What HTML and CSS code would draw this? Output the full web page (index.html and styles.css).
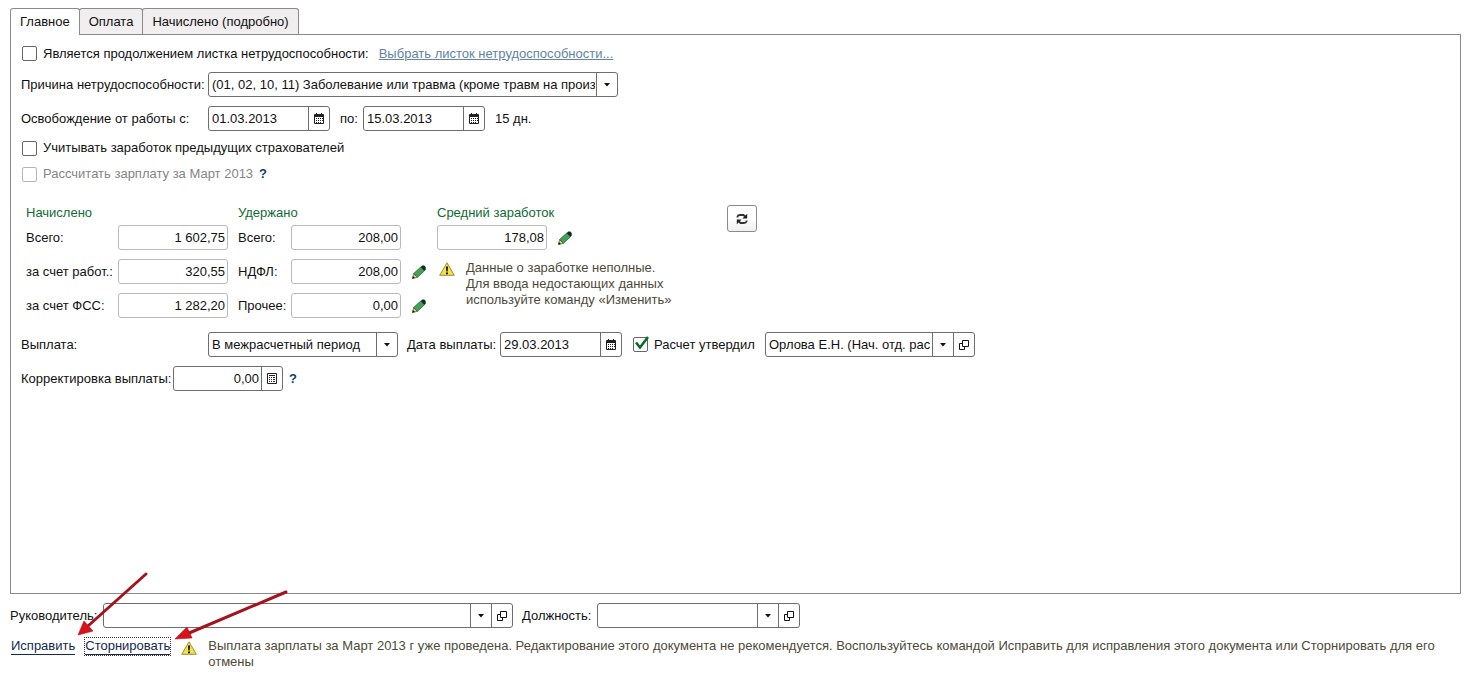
FILE: index.html
```html
<!DOCTYPE html>
<html lang="ru">
<head>
<meta charset="utf-8">
<meta name="viewport" content="width=device-width, initial-scale=1">
<title>Больничный лист</title>
<link rel="stylesheet" href="styles.css">
</head>
<body>
<svg class="sprite" aria-hidden="true">
  <symbol id="arrow" viewBox="0 0 8 4"><path d="M1 0h6L4 3.5z" fill="#111"/></symbol>
  <symbol id="calendar" viewBox="0 0 10 11"><path d="M0 2Q0 1 1 1h1V0h1v1h4V0h1v1h1q1 0 1 1v8q0 1-1 1H1Q0 11 0 10z" fill="#222"/><path d="M1 4h8v6H1z" fill="#fff"/><path d="M2 5h1v1H2zM4 5h1v1H4zM6 5h1v1H6zM2 7h1v1H2zM4 7h1v1H4zM6 7h1v1H6zM8 5h1v1H8zM8 7h1v1H8zM2 9h1v1H2zM4 9h1v1H4zM6 9h1v1H6z" fill="#222"/></symbol>
  <symbol id="calc" viewBox="0 0 10 11"><path d="M.5.5h9v10h-9z" fill="#fff" stroke="#222"/><path d="M2 2h6v1H2zM2 4h1v1H2zM4 4h1v1H4zM6 4h2v1H6zM2 6h1v1H2zM4 6h1v1H4zM6 6h2v1H6zM2 8h1v1H2zM4 8h1v1H4zM6 8h2v1H6z" fill="#222"/></symbol>
  <symbol id="open" viewBox="0 0 10 10"><path d="M3.500.5h6v6h-6zM3.500 3.500h-3v6h5v-3" fill="none" stroke="#111"/></symbol>
  <symbol id="pencil" viewBox="0 0 14 14"><path d="M.5 13.500 1.600 8.600 5.500 12.300z" fill="#e8cf86" stroke="#4a3a18" stroke-width=".6"/><path d="M.3 13.700l.6-2.700 2.100 2z" fill="#111"/><path d="M1.600 8.600 8.700 2l3.700 3.900-6.900 6.400z" fill="#43a157" stroke="#1c5b2d" stroke-width=".7"/><path d="M8.700 2 10.400.5h1.800l1.500 1.500v2.500L12.400 5.900z" fill="#0d2c18"/></symbol>
  <symbol id="warning" viewBox="0 0 16 14"><path d="M8 .8 15.300 13.300H.7z" fill="#f3e04a" stroke="#9a8f3a" stroke-linejoin="round"/><path d="M7 4.500h2L8.700 9.500H7.300zM7 10.400h2v1.800H7z" fill="#111"/></symbol>
  <symbol id="refresh" viewBox="0 0 12 12"><path d="M1.500 4.500V3.500Q2 2 4 2h3.500L9 3.500M10.500 7.500v1Q10 10 8 10H4.500L3 8.500" fill="none" stroke="#333" stroke-width="1.800"/><path d="M11.200.8v4.600H6.400zM.8 11.200V6.600h4.800z" fill="#222"/></symbol>
</svg>

<nav class="tabs" role="tablist">
  <button class="tab tab-active" role="tab" aria-selected="true">Главное</button>
  <button class="tab" role="tab" aria-selected="false">Оплата</button>
  <button class="tab" role="tab" aria-selected="false">Начислено (подробно)</button>
</nav>

<main class="panel">
  <div class="row row-short">
    <label class="check"><input type="checkbox"><span>Является продолжением листка нетрудоспособности:</span></label>
    <a class="pick" href="#">Выбрать листок нетрудоспособности...</a>
  </div>
  <div class="row">
    <label class="caption" for="reason">Причина нетрудоспособности:</label>
    <div class="field field-xl">
      <select id="reason"><option>(01, 02, 10, 11) Заболевание или травма (кроме травм на производстве)</option></select>
      <button aria-label="Открыть список"><svg class="i-arrow"><use href="#arrow"/></svg></button>
    </div>
  </div>
  <div class="row row-dates">
    <label class="caption" for="from">Освобождение от работы с:</label>
    <div class="field field-date"><input id="from" type="text" value="01.03.2013"><button aria-label="Календарь"><svg class="i-cal"><use href="#calendar"/></svg></button></div>
    <label class="between" for="to">по:</label>
    <div class="field field-date"><input id="to" type="text" value="15.03.2013"><button aria-label="Календарь"><svg class="i-cal"><use href="#calendar"/></svg></button></div>
    <span class="days">15 дн.</span>
  </div>
  <div class="row row-check"><label class="check"><input type="checkbox"><span>Учитывать заработок предыдущих страхователей</span></label></div>
  <div class="row row-check"><label class="check check-off"><input type="checkbox" disabled><span>Рассчитать зарплату за Март 2013</span></label><button class="help" aria-label="Справка">?</button></div>

  <section class="totals">
    <div class="group group-accrued">
      <h2>Начислено</h2>
      <div class="amounts">
        <label for="a1">Всего:</label><input id="a1" class="amount" type="text" readonly value="1 602,75">
        <label for="a2">за счет работ.:</label><input id="a2" class="amount" type="text" readonly value="320,55">
        <label for="a3">за счет ФСС:</label><input id="a3" class="amount" type="text" readonly value="1 282,20">
      </div>
    </div>
    <div class="group group-held">
      <h2>Удержано</h2>
      <div class="amounts">
        <label for="h1">Всего:</label><input id="h1" class="amount" type="text" readonly value="208,00"><span></span>
        <label for="h2">НДФЛ:</label><input id="h2" class="amount" type="text" readonly value="208,00"><button class="edit" aria-label="Изменить НДФЛ"><svg class="i-pencil"><use href="#pencil"/></svg></button>
        <label for="h3">Прочее:</label><input id="h3" class="amount" type="text" readonly value="0,00"><button class="edit" aria-label="Изменить прочее"><svg class="i-pencil"><use href="#pencil"/></svg></button>
      </div>
    </div>
    <div class="group group-average">
      <h2><label for="avg">Средний заработок</label></h2>
      <div class="average"><input id="avg" class="amount" type="text" readonly value="178,08"><button class="edit" aria-label="Изменить средний заработок"><svg class="i-pencil"><use href="#pencil"/></svg></button></div>
      <div class="notice"><svg class="i-warning"><use href="#warning"/></svg><p>Данные о заработке неполные.<br>Для ввода недостающих данных<br>используйте команду «Изменить»</p></div>
    </div>
    <button class="refresh" aria-label="Пересчитать"><svg class="i-refresh"><use href="#refresh"/></svg></button>
  </section>

  <div class="row">
    <label class="caption" for="pay">Выплата:</label>
    <div class="field field-pay"><select id="pay"><option>В межрасчетный период</option></select><button aria-label="Открыть список"><svg class="i-arrow"><use href="#arrow"/></svg></button></div>
    <label class="pay-date" for="paydate">Дата выплаты:</label>
    <div class="field field-date"><input id="paydate" type="text" value="29.03.2013"><button aria-label="Календарь"><svg class="i-cal"><use href="#calendar"/></svg></button></div>
    <label class="check approved"><input type="checkbox" checked><span>Расчет утвердил</span></label>
    <div class="field field-person"><input type="text" aria-label="Расчет утвердил" value="Орлова Е.Н. (Нач. отд. расчетов)"><button aria-label="Открыть список"><svg class="i-arrow"><use href="#arrow"/></svg></button><button aria-label="Открыть"><svg class="i-open"><use href="#open"/></svg></button></div>
  </div>
  <div class="row">
    <label class="caption caption-fix" for="fix">Корректировка выплаты:</label>
    <div class="field field-fix"><input id="fix" class="number" type="text" value="0,00"><button aria-label="Калькулятор"><svg class="i-cal"><use href="#calc"/></svg></button></div>
    <button class="help" aria-label="Справка">?</button>
  </div>
</main>

<footer class="footer">
  <div class="signers">
    <label class="head" for="head">Руководитель:</label>
    <div class="field field-xl"><input id="head" type="text"><button aria-label="Открыть список"><svg class="i-arrow"><use href="#arrow"/></svg></button><button aria-label="Открыть"><svg class="i-open"><use href="#open"/></svg></button></div>
    <label class="post" for="post">Должность:</label>
    <div class="field field-post"><input id="post" type="text"><button aria-label="Открыть список"><svg class="i-arrow"><use href="#arrow"/></svg></button><button aria-label="Открыть"><svg class="i-open"><use href="#open"/></svg></button></div>
  </div>
  <div class="actions">
    <a class="action action-edit" href="#">Исправить</a>
    <a class="action action-storno" href="#">Сторнировать</a>
    <svg class="i-warning"><use href="#warning"/></svg>
    <p>Выплата зарплаты за Март 2013 г уже проведена. Редактирование этого документа не рекомендуется. Воспользуйтесь командой Исправить для исправления этого документа или Сторнировать для его отмены</p>
  </div>
  <svg class="pointers" viewBox="0 0 220 80" aria-hidden="true">
    <path d="M76 4 18 56M216 22 118 63.500" stroke="#a3141c" stroke-width="3" stroke-linecap="round"/>
    <path d="M8 65 14 51 23 61zM105 69 117 57 122 68z" fill="#d8121a" stroke="#b01018" stroke-width=".6"/>
  </svg>
</footer>
</body>
</html>
```

FILE: styles.css
```css
* { box-sizing: border-box; }

body {
  margin: 0;
  min-height: 100vh;
  padding: 8px 10px;
  display: flex;
  flex-direction: column;
  background: #fff;
  color: #111;
  font: 13px/16px "Liberation Sans", Arial, sans-serif;
}

button, input, select { font: inherit; color: inherit; margin: 0; }
button { padding: 0; border: 0; background: none; }
h2, p { margin: 0; font: inherit; }
svg { display: block; flex: none; }
label { white-space: nowrap; }
.sprite { position: absolute; width: 0; height: 0; }

.tabs { display: flex; }
.tab {
  height: 26px;
  padding: 0 9px;
  border: 1px solid #8a8a8a;
  border-bottom: 0;
  border-radius: 3px 3px 0 0;
  background: #f0eeee;
  margin-right: -1px;
}
.tab-active {
  height: 27px;
  margin-bottom: -1px;
  background: #fff;
  z-index: 1;
}

.panel {
  flex: 1;
  border: 1px solid #8a8a8a;
  padding: 8px 10px;
}
.row { display: flex; align-items: center; min-height: 25px; margin-bottom: 9px; }
.row-short { min-height: 21px; margin-bottom: 8px; }
.row-dates { margin-bottom: 8px; }
.row-check { min-height: 18px; margin-bottom: 8px; }

.caption { width: 187px; }
.caption-fix { width: 152px; }
.between { width: 33px; padding-left: 10px; }
.days { padding-left: 10px; }
.pick { margin-left: 10px; color: #5f84a6; }

.check { display: flex; align-items: center; gap: 6px; }
.check input {
  appearance: none;
  position: relative;
  width: 15px;
  height: 15px;
  margin-left: 1px;
  border: 1px solid #666;
  border-radius: 2px;
  background: #fff;
}
.check-off { color: #858585; }
.check-off input { border-color: #b5b5b5; }
.check input:checked::after {
  content: "";
  position: absolute;
  left: 0;
  top: -2px;
  width: 15px;
  height: 14px;
  background: url("data:image/svg+xml,%3Csvg xmlns='http://www.w3.org/2000/svg' viewBox='0 0 15 14'%3E%3Cpath d='M2 6.500l4 5L14 1' fill='none' stroke='%23086b28' stroke-width='2.600'/%3E%3C/svg%3E") no-repeat;
}
.help { width: 8px; margin-left: 6px; color: #0b3f6c; font-weight: bold; }

.field {
  display: flex;
  height: 25px;
  border: 1px solid #6e6e6e;
  border-radius: 3px;
  background: #fff;
}
.field input, .field select {
  appearance: none;
  flex: 1;
  min-width: 0;
  width: 0;
  padding: 0 1px 0 3px;
  border: 0;
  outline: 0;
  background: none;
}
.field .number { padding-right: 2px; text-align: right; }
.field button {
  display: flex;
  align-items: center;
  justify-content: center;
  width: 21px;
  border-left: 1px solid #6e6e6e;
}
.field-xl { width: 410px; }
.field-date { width: 122px; }
.field-pay { width: 190px; }
.field-person { width: 210px; }
.field-person input { margin-right: 2px; padding-right: 0; }
.field-fix { width: 110px; }
.field-post { width: 203px; }

.i-arrow { width: 8px; height: 4px; }
.i-cal { width: 10px; height: 11px; }
.i-open { width: 10px; height: 10px; }
.i-pencil { width: 14px; height: 14px; }
.i-warning { width: 16px; height: 14px; }
.i-refresh { width: 12px; height: 12px; }

.totals { display: flex; align-items: flex-start; padding: 14px 0 14px 5px; }
.totals h2 { height: 20px; color: #0f6b33; }
.amounts { display: grid; row-gap: 9px; align-items: center; }
.group-accrued { width: 212px; }
.group-accrued .amounts { grid-template-columns: 92px 110px; }
.group-held { width: 199px; }
.group-held .amounts { grid-template-columns: 53px 110px 36px; }
.group-average { width: 290px; }
.amount {
  width: 110px;
  height: 25px;
  padding: 0 2px;
  border: 1px solid #b9b9b9;
  border-radius: 3px;
  background: #fff;
  text-align: right;
}
.edit { width: 14px; margin-left: 11px; padding-top: 1px; }
.average { display: flex; align-items: center; }
.notice { display: flex; gap: 11px; padding: 10px 0 0 2px; color: #4d4a38; }
.notice .i-warning { margin-top: 2px; }
.refresh {
  display: flex;
  align-items: center;
  justify-content: center;
  width: 30px;
  height: 27px;
  border: 1px solid #8a8a8a;
  border-radius: 3px;
  background: linear-gradient(#fff 50%, #f0f0f0);
}
.pay-date { width: 102px; padding-left: 9px; }
.approved { width: 143px; padding-left: 10px; }

.footer { position: relative; padding-top: 9px; }
.signers { display: flex; align-items: center; margin-bottom: 10px; }
.head { width: 93px; }
.post { width: 84px; padding-left: 9px; }
.actions { display: flex; align-items: flex-start; color: #4d4a38; }
.action { color: #14284f; text-decoration: none; border-bottom: 1px solid #14284f; }
.action-edit { margin: 0 10px 0 1px; }
.action-storno { outline: 1px dotted #333; }
.actions .i-warning { margin: 3px 11px 0; }

.pointers { position: absolute; left: 60px; top: -24px; width: 220px; height: 80px; pointer-events: none; }
```
